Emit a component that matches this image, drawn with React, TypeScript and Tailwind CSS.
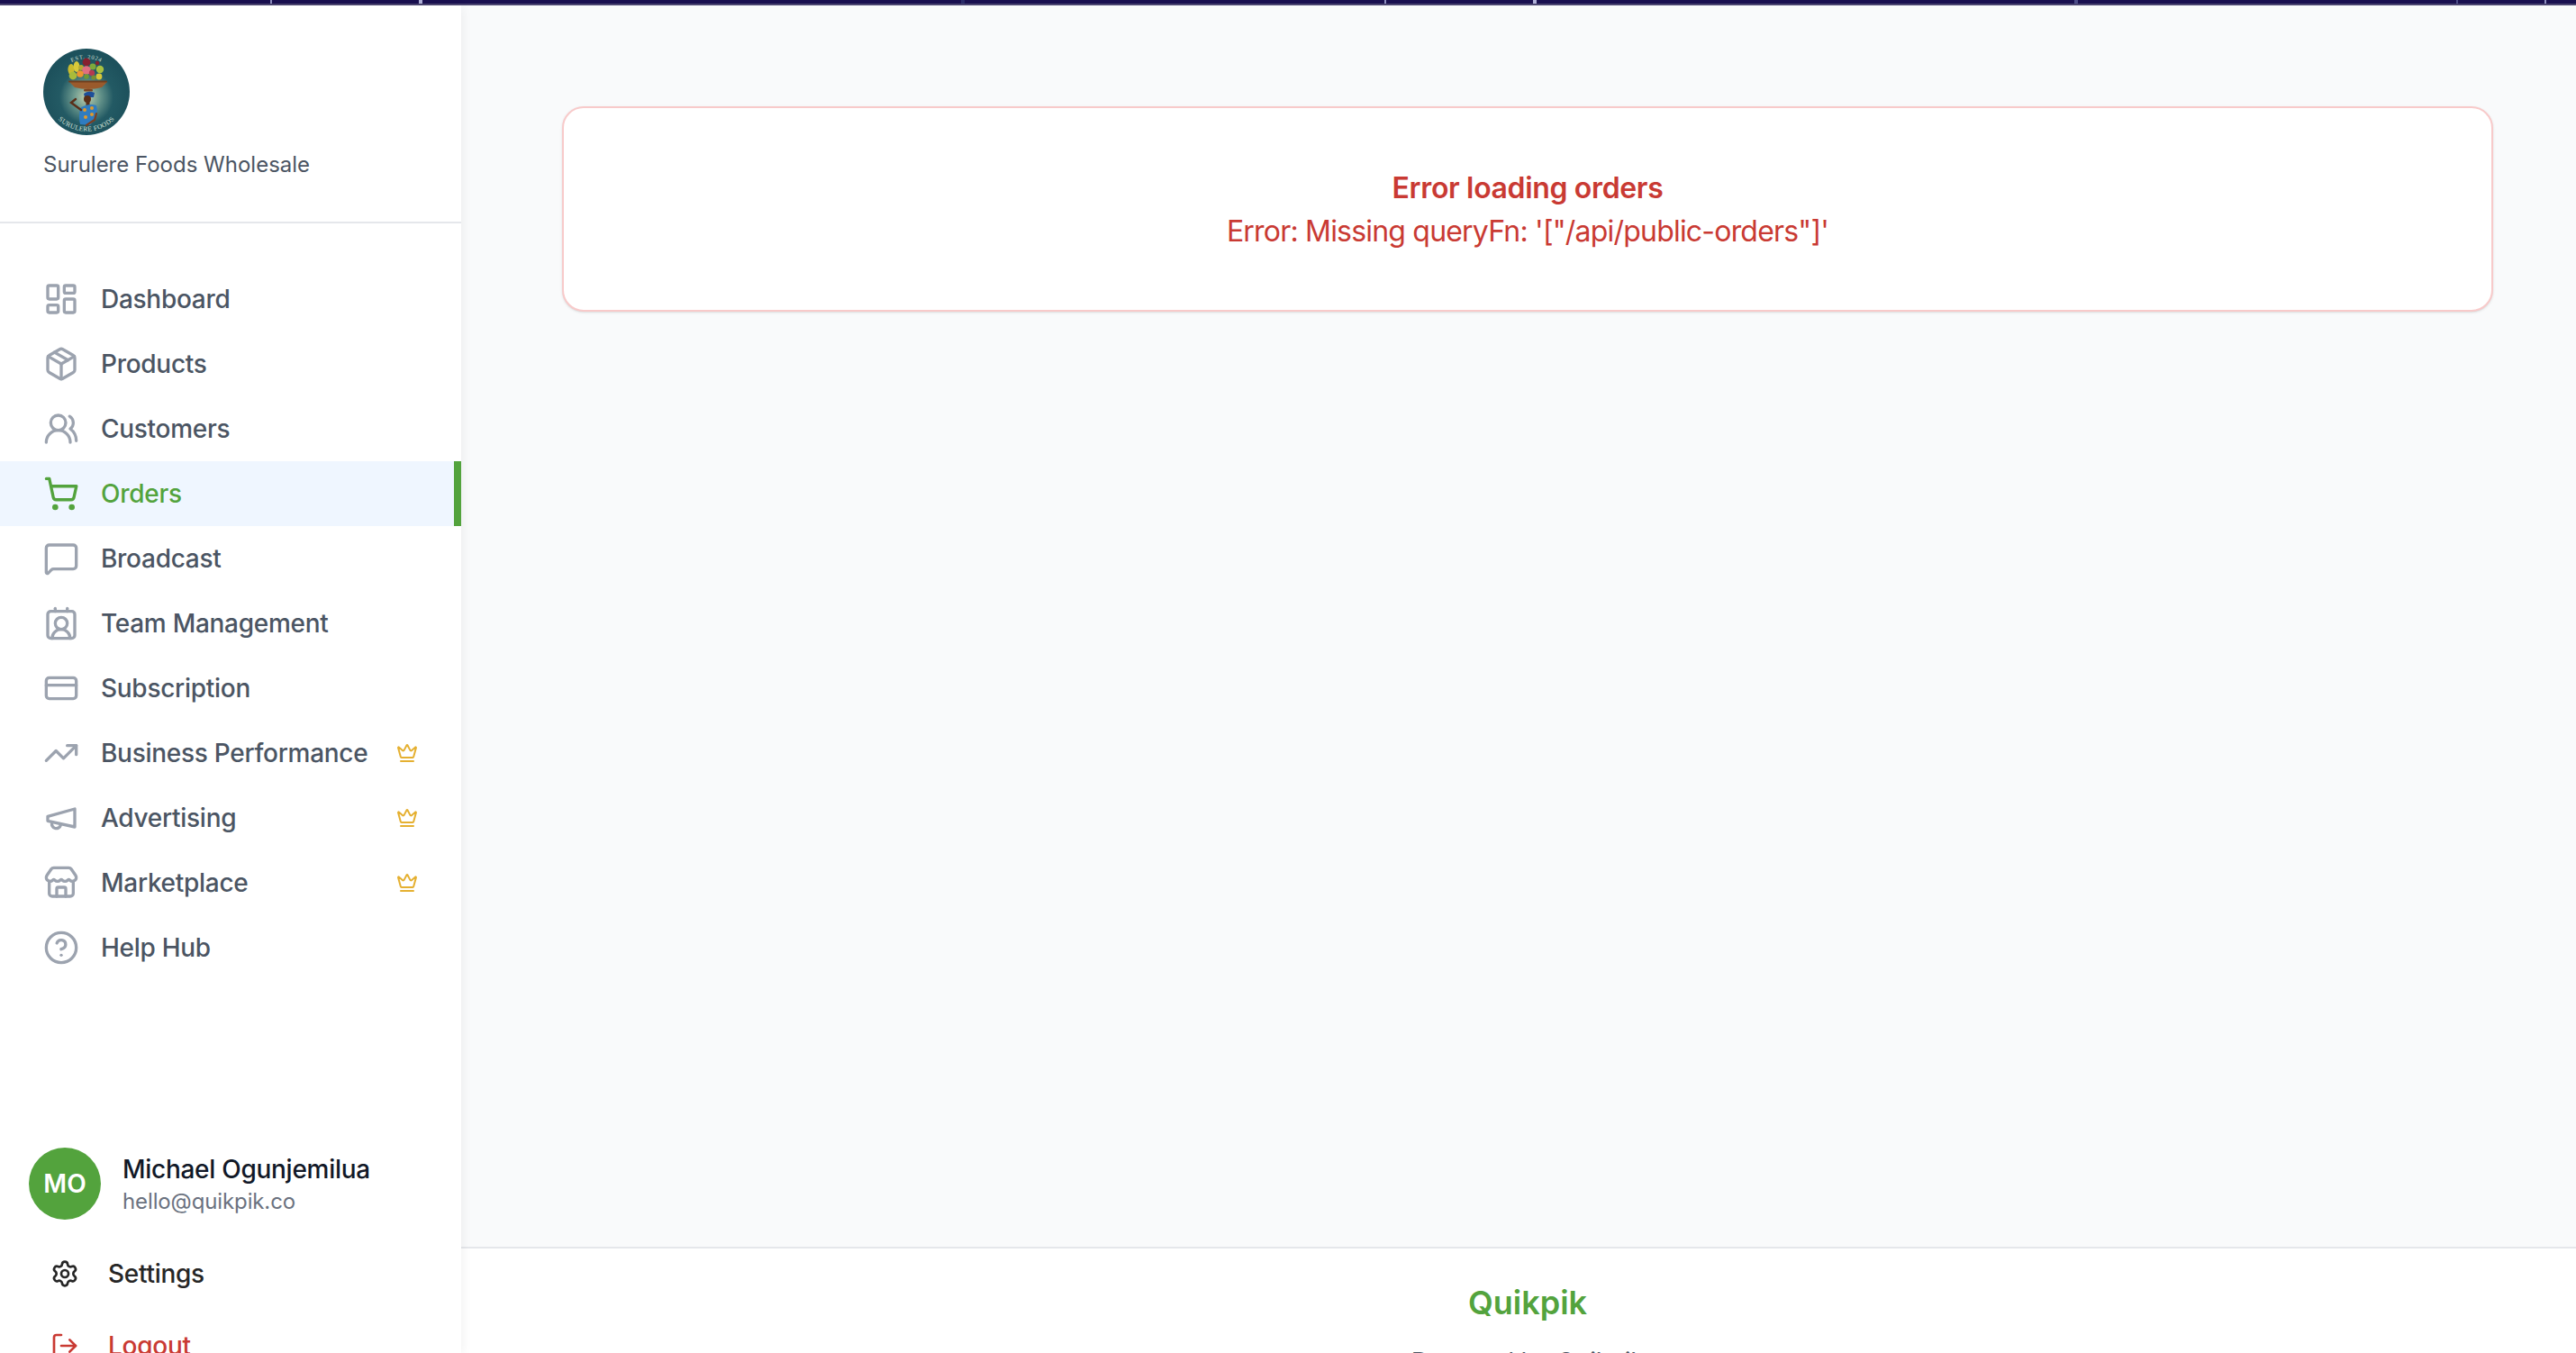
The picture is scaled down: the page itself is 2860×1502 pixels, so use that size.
import {
  ContactRound,
  CircleHelp,
  CreditCard,
  Crown,
  LayoutDashboard,
  LogOut,
  Package,
  Settings,
  ShoppingCart,
  Store,
  TrendingUp,
  UsersRound,
  MessageSquare,
} from "lucide-react"
import type { ReactNode } from "react"

const Megaphone = ({ className }: { className?: string }) => (
  <svg
    viewBox="0 0 24 24"
    fill="none"
    stroke="currentColor"
    strokeWidth={2}
    strokeLinecap="round"
    strokeLinejoin="round"
    className={className}
  >
    <path d="m3 11 18-5v12L3 14v-3z" />
    <path d="M11.6 16.8a3 3 0 1 1-5.8-1.6" />
  </svg>
)

const Logo = () => (
  <svg viewBox="0 0 96 96" className="w-24 h-24 block">
    <defs>
      <radialGradient id="logoBg" cx="50%" cy="56%" r="50%">
        <stop offset="0%" stopColor="#c3cfae" />
        <stop offset="28%" stopColor="#6f9c90" />
        <stop offset="62%" stopColor="#235a64" />
        <stop offset="100%" stopColor="#1d515c" />
      </radialGradient>
      <path id="logoTop" d="M17 28 A37 37 0 0 1 79 28" />
      <path id="logoBottom" d="M8 66 A44 44 0 0 0 88 66" />
    </defs>
    <circle cx="48" cy="48" r="48" fill="url(#logoBg)" />
    <text fontSize="6.5" fill="#d5e0d8" fontFamily="Liberation Serif, serif" letterSpacing="0.7">
      <textPath href="#logoTop" startOffset="50%" textAnchor="middle">EST. 2024</textPath>
    </text>
    <text fontSize="7.5" fill="#d5e0d8" fontFamily="Liberation Serif, serif" letterSpacing="0.3">
      <textPath href="#logoBottom" startOffset="50%" textAnchor="middle">SURULERE FOODS</textPath>
    </text>
    {/* fruit */}
    <ellipse cx="31" cy="23" rx="3.6" ry="6" fill="#c9bb2e" />
    <ellipse cx="37" cy="20" rx="3.4" ry="6" fill="#d8c93a" />
    <circle cx="33" cy="30" r="4.4" fill="#a9bb3a" />
    <circle cx="48" cy="15" r="4.4" fill="#86202f" />
    <circle cx="42" cy="21" r="3" fill="#b5a832" />
    <circle cx="55" cy="20" r="3.6" fill="#7da83a" />
    <circle cx="48" cy="24" r="4.8" fill="#e06f80" />
    <circle cx="41" cy="28" r="3.8" fill="#ec9530" />
    <circle cx="63" cy="23" r="4.2" fill="#a8c040" />
    <circle cx="54" cy="27" r="3.2" fill="#b53a50" />
    <circle cx="62" cy="31" r="3.4" fill="#d8c838" />
    <circle cx="48" cy="31" r="2.8" fill="#6f9a34" />
    <circle cx="60" cy="16" r="2.2" fill="#86202f" />
    <circle cx="56" cy="32" r="2.6" fill="#7a8f30" />
    {/* bowl */}
    <path d="M29 37 H71 L65 43 Q50 47 35 43 Z" fill="#9a5a2c" />
    <rect x="28" y="35.5" width="43" height="2" rx="1" fill="#6f3e1e" />
    <rect x="45" y="45" width="10" height="2.5" rx="1" fill="#7a4522" />
    {/* woman */}
    <path d="M45 50 Q50 46 57 49 L56 54 H46 Z" fill="#1d4f9a" />
    <circle cx="49" cy="56" r="4" fill="#5a2e18" />
    <rect x="47.5" y="59" width="4" height="4" fill="#5a2e18" />
    <path d="M41 66 Q50 60 59 63 Q61 70 58 78 L52 85 L41 84 Q39 76 41 66 Z" fill="#2f7cc0" />
    <circle cx="46" cy="68" r="2" fill="#e09a2c" />
    <circle cx="54" cy="66" r="2" fill="#e09a2c" />
    <circle cx="47" cy="76" r="2" fill="#e09a2c" />
    <circle cx="54" cy="73" r="2" fill="#e09a2c" />
    <path d="M42 68 L31 60 L36 56" stroke="#5a2e18" strokeWidth="2.4" fill="none" strokeLinecap="round" />
    <path d="M59 72 L57 79 L48 85" stroke="#7a3f20" strokeWidth="2.2" fill="none" strokeLinecap="round" />
  </svg>
)

type NavEntry = { label: string; icon: ReactNode; premium?: boolean; active?: boolean }

const iconClass = "w-10 h-10 shrink-0"

const navItems: NavEntry[] = [
  { label: "Dashboard", icon: <LayoutDashboard className={iconClass} /> },
  { label: "Products", icon: <Package className={iconClass} /> },
  { label: "Customers", icon: <UsersRound className={iconClass} /> },
  { label: "Orders", icon: <ShoppingCart className={iconClass} />, active: true },
  { label: "Broadcast", icon: <MessageSquare className={iconClass} /> },
  { label: "Team Management", icon: <ContactRound className={iconClass} /> },
  { label: "Subscription", icon: <CreditCard className={iconClass} /> },
  { label: "Business Performance", icon: <TrendingUp className={iconClass} />, premium: true },
  { label: "Advertising", icon: <Megaphone className={iconClass} />, premium: true },
  { label: "Marketplace", icon: <Store className={iconClass} />, premium: true },
  { label: "Help Hub", icon: <CircleHelp className={iconClass} /> },
]

const NavItem = ({ item }: { item: NavEntry }) => (
  <div
    className={
      item.active
        ? "relative h-[72px] flex items-center gap-6 pl-12 pr-12 bg-[#eff6ff] text-[#53a33d]"
        : "relative h-[72px] flex items-center gap-6 pl-12 pr-12 text-[#9ca3af]"
    }
  >
    {item.icon}
    <span
      className={
        item.active
          ? "text-[28px] leading-10 font-medium tracking-[-0.01em] text-[#53a33d]"
          : "text-[28px] leading-10 font-medium tracking-[-0.01em] text-[#4b5563]"
      }
    >
      {item.label}
    </span>
    {item.premium && <Crown className="ml-auto w-6 h-6 text-[#e5b031]" />}
    {item.active && <div className="absolute right-0 top-0 bottom-0 w-2 bg-[#53a33d]" />}
  </div>
)

const Sidebar = () => (
  <aside className="w-[512px] shrink-0 h-full bg-white flex flex-col shadow-[0_2px_12px_rgba(0,0,0,0.07)] z-10">
    <div className="h-[242px] shrink-0 pt-12 px-12 border-b-2 border-[#e5e7eb]">
      <Logo />
      <p className="mt-[17px] text-2xl leading-8 text-[#4b5563]">Surulere Foods Wholesale</p>
    </div>
    <nav className="pt-12">
      {navItems.map((item) => (
        <NavItem key={item.label} item={item} />
      ))}
    </nav>
    <div className="mt-[186px] px-8">
      <div className="flex items-center gap-6">
        <div className="w-20 h-20 rounded-full bg-[#53a33d] flex items-center justify-center text-white text-[28px] font-semibold">
          MO
        </div>
        <div>
          <p className="text-[28px] leading-10 font-medium tracking-[-0.01em] text-[#111827]">Michael Ogunjemilua</p>
          <p className="text-2xl leading-8 tracking-[-0.005em] text-[#6b7280]">hello@quikpik.co</p>
        </div>
      </div>
      <div className="mt-5 h-[80px] flex items-center gap-8 pl-6 text-[#262626]">
        <Settings className="w-8 h-8" />
        <span className="text-[28px] font-medium tracking-[-0.01em]">Settings</span>
      </div>
      <div className="h-[80px] flex items-center gap-8 pl-6 text-[#c93a33]">
        <LogOut className="w-8 h-8" />
        <span className="text-[28px] font-medium tracking-[-0.01em]">Logout</span>
      </div>
    </div>
  </aside>
)

const App = () => (
  <div className="h-screen overflow-hidden flex flex-col bg-[#f9fafb] font-['Inter',sans-serif]">
    {/* Strip of the page behind the window */}
    <div className="relative h-1.5 shrink-0 bg-[#1a1050] border-b-2 border-[#4b4570]">
      <span className="absolute left-[300px] top-0 w-0.5 h-1 bg-[#8f8fc0]" />
      <span className="absolute left-[465px] top-0 w-1 h-1 bg-[#b0b0d8]" />
      <span className="absolute left-[1067px] top-0 w-1 h-1 bg-[#2a2a68]" />
      <span className="absolute left-[1537px] top-0 w-0.5 h-1 bg-[#8f8fc0]" />
      <span className="absolute left-[1702px] top-0 w-1 h-1 bg-[#b0b0d8]" />
      <span className="absolute left-[2303px] top-0 w-1 h-1 bg-[#4c4c88]" />
      <span className="absolute left-[2727px] top-0 w-0.5 h-1 bg-[#4c4c88]" />
      <span className="absolute left-[2825px] top-0 w-0.5 h-1 bg-[#8f8fc0]" />
    </div>
    <div className="flex-1 min-h-0 flex">
      <Sidebar />
      <div className="flex-1 min-w-0 flex flex-col">
        <main className="h-[1378px] shrink-0 pl-[112px] pr-[92px] pt-[112px]">
          <div className="h-[228px] pt-[2px] bg-white border-2 border-[#f8caca] rounded-3xl shadow-sm flex flex-col items-center justify-center text-center">
            <h2 className="text-[32px] leading-[48px] font-semibold tracking-[-0.011em] text-[#c93a33]">Error loading orders</h2>
            <p className="text-[32px] leading-[48px] tracking-[-0.025em] text-[#c93a33]">
              Error: Missing queryFn: '["/api/public-orders"]'
            </p>
          </div>
        </main>
        <footer className="flex-1 bg-white border-t-2 border-[#e5e7eb] pl-5 pt-10 text-center">
          <h3 className="text-4xl leading-10 font-semibold text-[#53a33d]">Quikpik</h3>
          <p className="mt-[26px] text-[28px] leading-10 tracking-[-0.01em] text-[#4b5563]">Powered by Quikpik</p>
        </footer>
      </div>
    </div>
  </div>
)

export default App
